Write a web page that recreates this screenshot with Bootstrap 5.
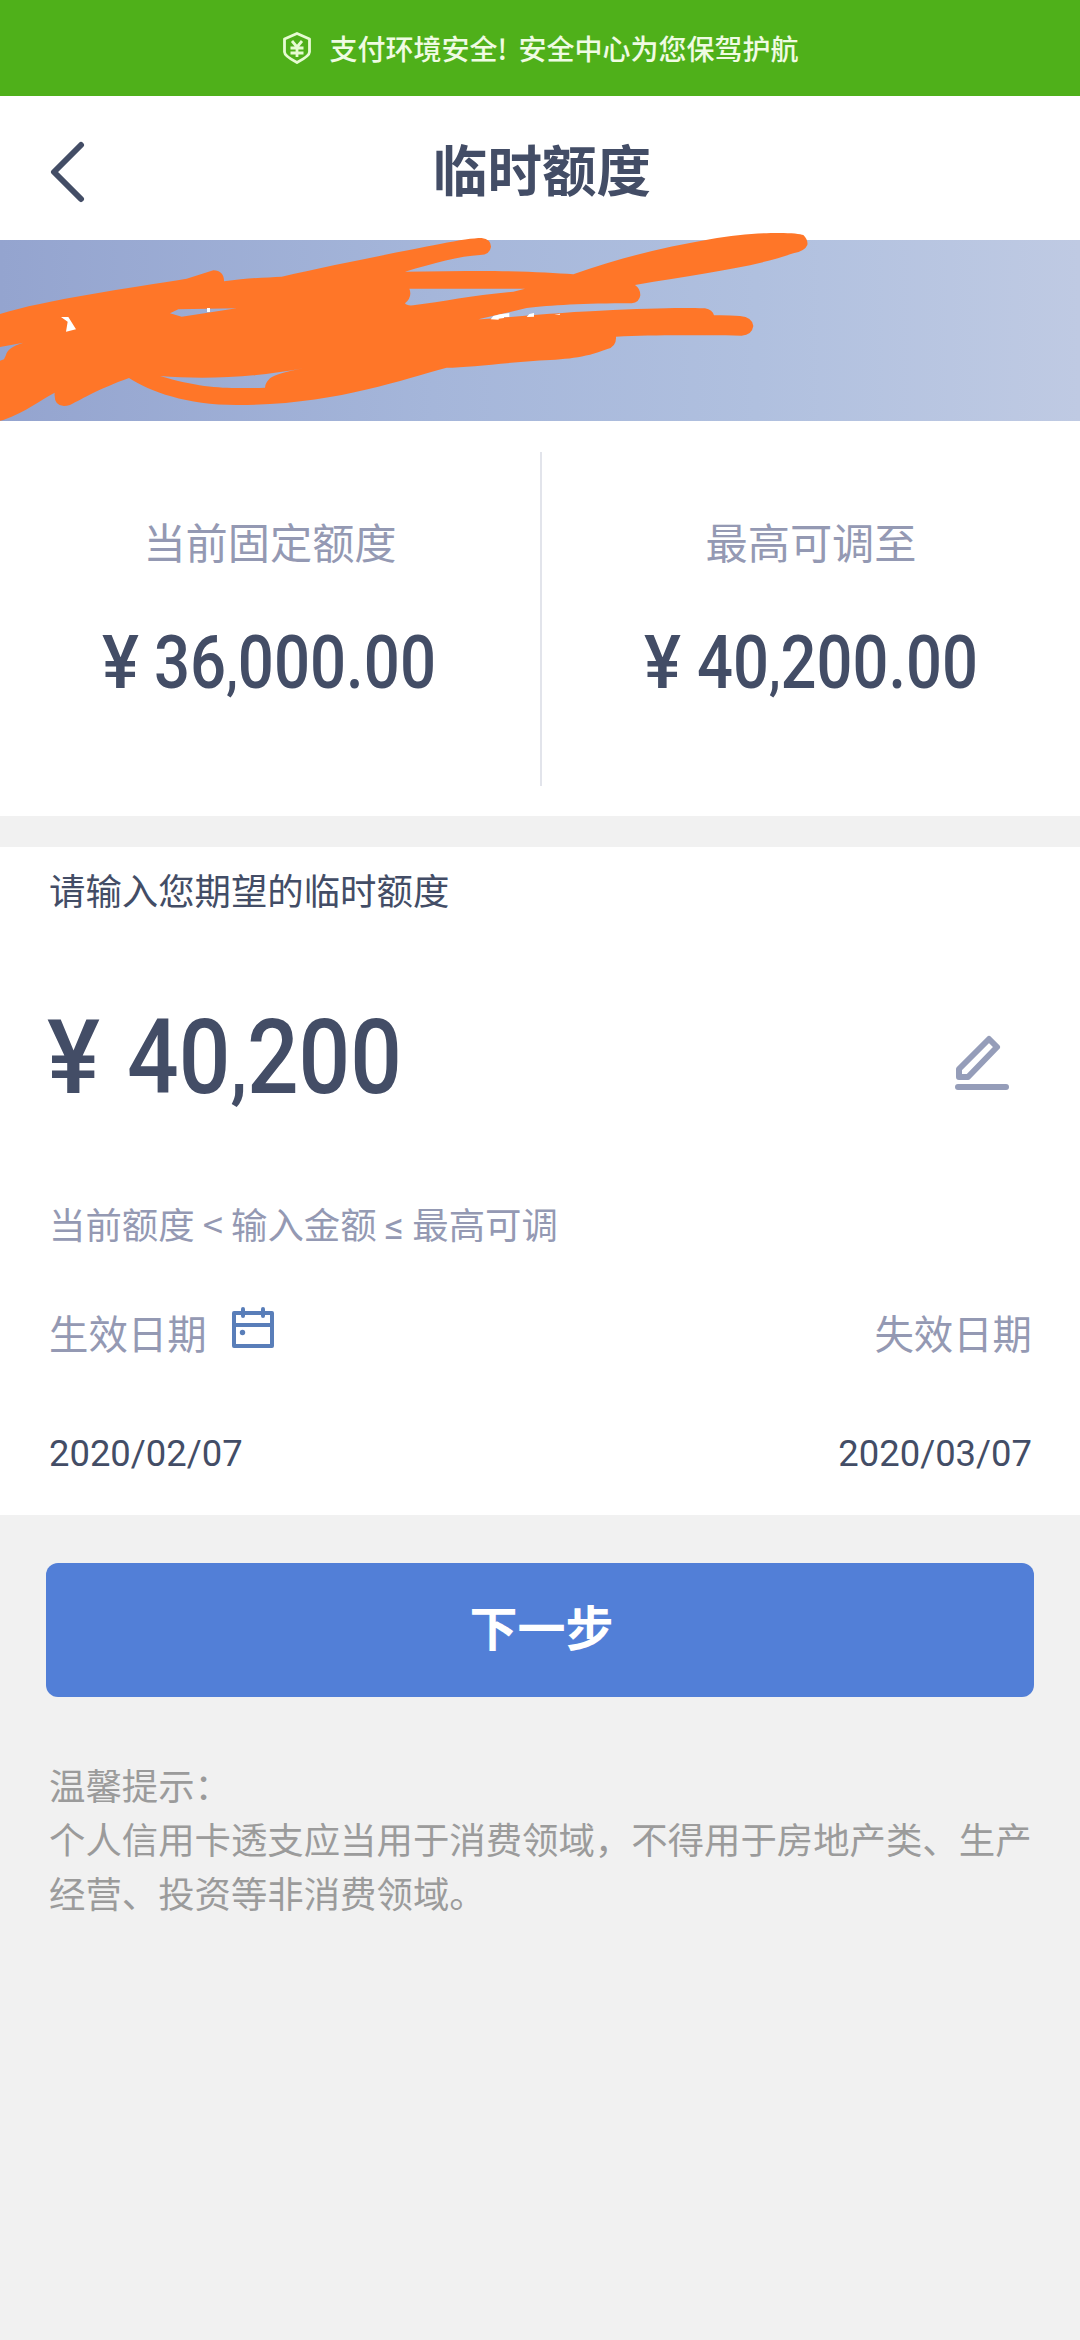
<!DOCTYPE html>
<html lang="zh-CN">
<head>
<meta charset="utf-8">
<meta name="viewport" content="width=device-width, initial-scale=1">
<title>临时额度</title>
<link href="https://cdn.jsdelivr.net/npm/bootstrap@5.3.0/dist/css/bootstrap.min.css" rel="stylesheet">
<style>
body{background:#f1f1f1;font-family:"Noto Sans CJK SC",sans-serif;color:#434d66;width:1080px;min-height:2340px;overflow-x:hidden}
svg{display:block;flex:none}
.safety-bar{height:96px;background:#4fb01a;color:#effbe3;font-size:28px;font-weight:500;gap:18px}
.safety-bar p{line-height:40px;white-space:pre;word-spacing:5px}
.title-bar{height:144px}
.title-bar h1{font-size:54.5px;font-weight:700;line-height:80px;padding-bottom:1px;padding-left:4px}
.back-btn{left:49px;top:45px}
.banner{height:181px;background:linear-gradient(90deg,#94a4cf 0%,#a5b6da 40%,#b0c0df 70%,#bfcae3 100%)}
.scribble{left:0;top:-20px;z-index:2}
.limits{height:395px;padding-top:31px}
.limits .limit-item{padding-top:58px;height:334px}
.limit-sum{margin-top:45px}
.rule-line{width:2px;height:334px;background:#e2e4eb}
.limit-name{font-size:42.2px;line-height:62px;color:#9499b3}
.request{margin-top:31px;height:668px;padding:0 48px 0 49px}
.prompt-line{font-size:36.4px;line-height:54px;padding-top:15px}
.amount-row{height:160px;margin-top:60px}
.edit-btn{margin:13px 22px 0 0}
.hint-line{font-size:36.4px;line-height:54px;margin-top:60px;color:#9499b3}
.le-sign{font-family:Roboto,sans-serif;font-size:38px;line-height:1}
.date-names{font-size:39.4px;line-height:58px;margin-top:53px;color:#9499b3}
.cal-icon{margin:3px 0 0 24px}
.date-values{font-family:Roboto,"Noto Sans CJK SC",sans-serif;font-size:36.4px;line-height:44px;margin-top:71px}
.next-btn{margin:48px 46px 0;width:988px;height:134px;border-radius:12px;background:#527fd7;border:0;font-size:48px;font-weight:700;line-height:70px;color:#fff;padding:0 0 11px 3px}
.tips{margin-top:60px;padding:0 40px 0 49px;font-size:36.4px;line-height:54px;color:#9b9b9b}
.num{font-family:Roboto,sans-serif;font-weight:500;fill:#434d66}
.num tspan{font-size:.74em;font-weight:700}
</style>
</head>
<body>
<header class="safety-bar d-flex justify-content-center align-items-center">
  <svg width="30" height="34" viewBox="0 0 30 34" fill="none" stroke="#e6fbd2" stroke-width="2.8" stroke-linejoin="round"><path d="M15 2.5 27.5 8V21Q27.5 25 15 31.5 2.500 25 2.500 21V8Z"/><path d="M10 10l5 6 5-6M8.500 17h13M8.500 22h13M15 16v10"/></svg>
  <p class="m-0">支付环境安全! 安全中心为您保驾护航</p>
</header>
<nav class="title-bar bg-white position-relative d-flex justify-content-center align-items-center">
  <a href="#" class="back-btn position-absolute" aria-label="返回"><svg width="38" height="62" viewBox="0 0 38 62" fill="none" stroke="#434d66" stroke-width="6" stroke-linecap="round" stroke-linejoin="round"><path d="M32 4 5 31 32 58"/></svg></a>
  <h1 class="m-0">临时额度</h1>
</nav>
<section class="banner position-relative">
  <svg class="scribble position-absolute" width="1080" height="210" viewBox="0 0 3240 630">
    <path fill="#ff7628" fill-rule="evenodd" d="M0 282C130 240 400 202 560 176L640 151Q672 152 672 184C740 175 800 172 845 170C1000 135 1200 95 1320 72C1380 60 1420 54 1445 54Q1473 58 1473 80Q1470 104 1440 105C1380 108 1300 130 1215 155L1400 153C1550 152 1650 158 1720 163C1850 115 2000 80 2130 58C2260 34 2390 36 2410 45Q2425 60 2422 75Q2415 93 2380 100C2250 145 2100 160 1905 195Q1921 205 1921 226Q1918 248 1895 250C1750 250 1650 256 1580 264L1435 298C1500 295 1700 275 1800 272C1950 264 2050 262 2115 265Q2138 270 2142 286Q2180 285 2220 288Q2258 292 2260 318Q2256 345 2225 347C2050 345 1950 345 1848 350Q1850 380 1820 388C1750 415 1700 418 1600 423C1500 430 1400 443 1340 443C1200 480 1000 555 710 555C560 555 450 515 387 474C300 505 250 535 210 555Q160 568 164 518C120 540 80 575 10 600L0 602Z
    M0 381 70 368Q22 382 18 405L12 418 0 422Z
    M1228 206H1575L1540 215C1420 226 1330 244 1240 256Q1220 258 1215 250Q1238 230 1228 206Z
    M510 280 535 268 710 265 545 290Z
    M480 468C600 478 750 475 910 445Q830 460 810 475Q795 490 795 503C700 505 620 510 480 468Z"/>
    <path fill="#fff" d="M183 291 205 291 228 328 198 335 203 305ZM621 264h9v12h-9ZM1472 298 1480 288 1500 283 1528 279V291H1512V294L1496 296V299ZM1580 291 1588 282 1602 279V290ZM1663 284 1680 281V284Z"/>
  </svg>
</section>
<section class="limits bg-white d-flex">
  <div class="limit-item flex-fill w-50 d-flex flex-column align-items-center">
    <div class="limit-name">当前固定额度</div>
    <svg class="limit-sum" width="540" height="110" role="img"><g class="num" font-size="74.500"><text x="102" y="71" textLength="37" lengthAdjust="spacingAndGlyphs">¥</text><text x="154" y="71" textLength="282" lengthAdjust="spacingAndGlyphs">36<tspan>,</tspan>000.00</text></g></svg>
  </div>
  <div class="rule-line flex-shrink-0"></div>
  <div class="limit-item flex-fill w-50 d-flex flex-column align-items-center">
    <div class="limit-name">最高可调至</div>
    <svg class="limit-sum" width="538" height="110" role="img"><g class="num" font-size="74.500"><text x="102" y="71" textLength="37" lengthAdjust="spacingAndGlyphs">¥</text><text x="155" y="71" textLength="281" lengthAdjust="spacingAndGlyphs">40<tspan>,</tspan>200.00</text></g></svg>
  </div>
</section>
<main class="request bg-white">
  <div class="prompt-line">请输入您期望的临时额度</div>
  <div class="amount-row d-flex justify-content-between align-items-center">
    <svg width="400" height="160" overflow="visible" role="img"><g class="num" font-size="104.500"><text x="-2" y="117" textLength="53" lengthAdjust="spacingAndGlyphs">¥</text><text x="78" y="117" textLength="275" lengthAdjust="spacingAndGlyphs">40<tspan>,</tspan>200</text></g></svg>
    <a href="#" class="edit-btn" aria-label="编辑"><svg width="56" height="58" viewBox="0 0 56 58" fill="none" stroke="#959db9" stroke-width="6" stroke-linejoin="round"><path d="M5 35 35 5 43 13 14 43H5Z"/><path stroke-linecap="round" d="M4 53H52"/></svg></a>
  </div>
  <div class="hint-line">当前额度 &lt; 输入金额 <span class="le-sign">≤</span> 最高可调</div>
  <div class="date-names d-flex justify-content-between">
    <div class="d-flex">生效日期<svg class="cal-icon" width="44" height="44" viewBox="0 0 44 44" fill="none" stroke="#597eb9" stroke-width="4" stroke-linejoin="round"><path d="M3 7H41V40H3ZM3 19H41"/><path stroke-linecap="round" d="M12 3V10M32 3V10"/><circle cx="11.500" cy="26.500" r="2.700" fill="#597eb9" stroke="none"/></svg></div>
    <div>失效日期</div>
  </div>
  <div class="date-values d-flex justify-content-between"><span>2020/02/07</span><span>2020/03/07</span></div>
</main>
<button class="btn next-btn d-block" type="button">下一步</button>
<footer class="tips">
  <p class="m-0">温馨提示：</p>
  <p class="m-0">个人信用卡透支应当用于消费领域，不得用于房地产类、生产经营、投资等非消费领域。</p>
</footer>
<script src="https://cdn.jsdelivr.net/npm/bootstrap@5.3.0/dist/js/bootstrap.bundle.min.js"></script>
</body>
</html>
